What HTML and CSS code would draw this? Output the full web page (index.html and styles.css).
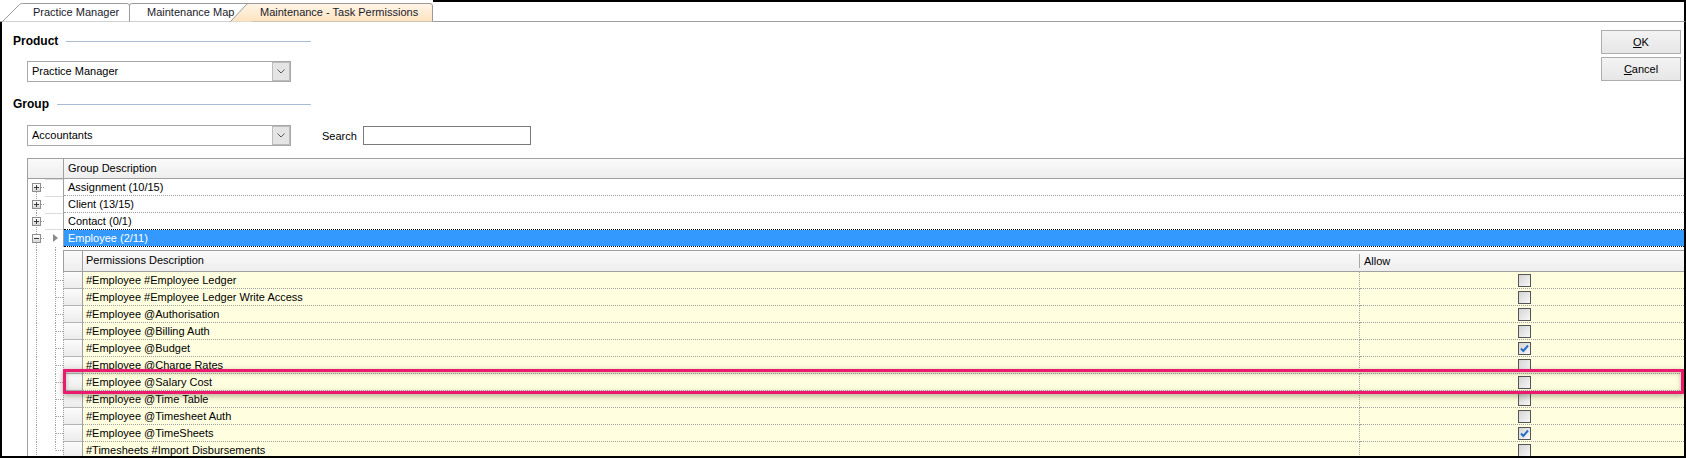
FILE: index.html
```html
<!DOCTYPE html>
<html>
<head>
<meta charset="utf-8">
<link rel="stylesheet" href="styles.css">
</head>
<body>
<div class="window">
  <div class="tabstrip">
    <svg class="tabshapes" width="440" height="22" viewBox="0 0 440 22">
      <defs>
        <linearGradient id="act" x1="0" y1="0" x2="0" y2="1">
          <stop offset="0" stop-color="#fff5e8"/>
          <stop offset="1" stop-color="#fde3c0"/>
        </linearGradient>
      </defs>
      <path d="M0 21.5H440" stroke="#a0a0a0" fill="none"/>
      <path d="M2.5 21.5 L19.5 4.5 Q20.5 3.5 22.5 3.5 H127 Q129.5 3.5 129.5 6 V21.5" fill="#fff" stroke="#9a9a9a"/>
      <path d="M129.5 21.5 V6 Q129.5 3.5 132 3.5 H252 V21.5" fill="#fff" stroke="#9a9a9a"/>
      <path d="M230.5 21.5 L246.5 4.5 Q247.5 3.5 249.5 3.5 H430 Q432.5 3.5 432.5 6 V21.5" fill="url(#act)" stroke="#9a9a9a"/>
    </svg>
    <div class="tab t1">Practice Manager</div>
    <div class="tab t2">Maintenance Map</div>
    <div class="tab t3">Maintenance - Task Permissions</div>
    <div class="tabfill"></div>
  </div>

  <div class="panel">
    <div class="top">
      <div class="form">
        <div class="section-head"><span>Product</span><span class="rule"></span></div>
        <div class="combo first">
          <span class="combo-text">Practice Manager</span>
          <span class="combo-btn"><svg width="8" height="5" viewBox="0 0 8 5"><path d="M0.5 0.5 L4 4 L7.5 0.5" fill="none" stroke="#5a5a5a"/></svg></span>
        </div>
        <div class="section-head group"><span>Group</span><span class="rule"></span></div>
        <div class="search-row">
          <div class="combo">
            <span class="combo-text">Accountants</span>
            <span class="combo-btn"><svg width="8" height="5" viewBox="0 0 8 5"><path d="M0.5 0.5 L4 4 L7.5 0.5" fill="none" stroke="#5a5a5a"/></svg></span>
          </div>
          <span class="search-label">Search</span>
          <span class="search-input"></span>
        </div>
      </div>
      <div class="btns">
        <div class="btn"><span><u>O</u>K</span></div>
        <div class="btn"><span><u>C</u>ancel</span></div>
      </div>
    </div>

    <div class="grid">
      <div class="ghead">
        <div class="lead"></div>
        <div class="cap">Group Description</div>
      </div>

      <div class="grow">
        <div class="tree first"><span class="exp"><svg width="7" height="7" viewBox="0 0 7 7"><path d="M1 3.5H6M3.5 1V6" stroke="#3a3a3a"/></svg></span></div>
        <div class="sel"></div>
        <div class="gcell">Assignment (10/15)</div>
      </div>
      <div class="grow">
        <div class="tree"><span class="exp"><svg width="7" height="7" viewBox="0 0 7 7"><path d="M1 3.5H6M3.5 1V6" stroke="#3a3a3a"/></svg></span></div>
        <div class="sel"></div>
        <div class="gcell">Client (13/15)</div>
      </div>
      <div class="grow">
        <div class="tree"><span class="exp"><svg width="7" height="7" viewBox="0 0 7 7"><path d="M1 3.5H6M3.5 1V6" stroke="#3a3a3a"/></svg></span></div>
        <div class="sel"></div>
        <div class="gcell nob">Contact (0/1)</div>
      </div>
      <div class="grow selrow">
        <div class="tree"><span class="exp"><svg width="7" height="7" viewBox="0 0 7 7"><path d="M1 3.5H6" stroke="#3a3a3a"/></svg></span></div>
        <div class="sel"><span class="arrow"></span></div>
        <div class="gcell selected">Employee (2/11)</div>
      </div>

      <div class="child-gap"><div class="gut"></div></div>

      <div class="chead">
        <div class="gut plain"></div>
        <div class="chead-band">
          <div class="chsel"></div>
          <div class="chdesc">Permissions Description</div>
          <div class="challow"><span class="sep"></span>Allow</div>
        </div>
      </div>

      <div class="crow"><div class="gut"></div><div class="csel"></div><div class="cdesc">#Employee #Employee Ledger</div><div class="callow"><span class="cb"></span></div></div>
      <div class="crow"><div class="gut"></div><div class="csel"></div><div class="cdesc">#Employee #Employee Ledger Write Access</div><div class="callow"><span class="cb"></span></div></div>
      <div class="crow"><div class="gut"></div><div class="csel"></div><div class="cdesc">#Employee @Authorisation</div><div class="callow"><span class="cb"></span></div></div>
      <div class="crow"><div class="gut"></div><div class="csel"></div><div class="cdesc">#Employee @Billing Auth</div><div class="callow"><span class="cb"></span></div></div>
      <div class="crow"><div class="gut"></div><div class="csel"></div><div class="cdesc">#Employee @Budget</div><div class="callow"><span class="cb"><svg width="11" height="11" viewBox="0 0 11 11"><path d="M2 5.5 L4.3 8 L9 2.5" fill="none" stroke="#2a6fc9" stroke-width="2"/></svg></span></div></div>
      <div class="crow"><div class="gut"></div><div class="csel"></div><div class="cdesc">#Employee @Charge Rates</div><div class="callow"><span class="cb"></span></div></div>
      <div class="crow"><div class="gut"></div><div class="csel"></div><div class="cdesc">#Employee @Salary Cost</div><div class="callow"><span class="cb"></span></div></div>
      <div class="crow"><div class="gut"></div><div class="csel"></div><div class="cdesc">#Employee @Time Table</div><div class="callow"><span class="cb"></span></div></div>
      <div class="crow"><div class="gut"></div><div class="csel"></div><div class="cdesc">#Employee @Timesheet Auth</div><div class="callow"><span class="cb"></span></div></div>
      <div class="crow"><div class="gut"></div><div class="csel"></div><div class="cdesc">#Employee @TimeSheets</div><div class="callow"><span class="cb"><svg width="11" height="11" viewBox="0 0 11 11"><path d="M2 5.5 L4.3 8 L9 2.5" fill="none" stroke="#2a6fc9" stroke-width="2"/></svg></span></div></div>
      <div class="crow"><div class="gut last"></div><div class="csel"></div><div class="cdesc">#Timesheets #Import Disbursements</div><div class="callow"><span class="cb"></span></div></div>
    </div>
  </div>

  <div class="highlight"></div>
</div>
</body>
</html>
```
FILE: styles.css
```css
* { box-sizing: border-box; }
html, body { margin: 0; padding: 0; }
body {
  width: 1686px;
  height: 458px;
  overflow: hidden;
  background: #fff;
  font-family: "Liberation Sans", Arial, sans-serif;
  font-size: 11px;
  color: #000;
}
.window {
  position: relative;
  width: 1686px;
  height: 458px;
  display: flex;
  flex-direction: column;
}

/* ---------- tabs ---------- */
.tabstrip {
  position: relative;
  flex: none;
  height: 22px;
  display: flex;
}
.tabshapes { position: absolute; left: 0; top: 0; }
.tab {
  position: relative;
  height: 22px;
  padding-top: 2px;
  line-height: 20px;
  white-space: nowrap;
  color: #1a1a2a;
}
.t1 { width: 129px; padding-left: 33px; }
.t2 { width: 116px; padding-left: 18px; }
.t3 { width: 188px; padding-left: 15px; }
.tabfill {
  flex: 1;
  height: 22px;
  border-top: 2px solid #000;
  border-right: 2px solid #000;
  border-bottom: 1px solid #a0a0a0;
}

/* ---------- panel ---------- */
.panel {
  flex: 1;
  min-height: 0;
  display: flex;
  flex-direction: column;
  border-left: 2px solid #000;
  border-right: 2px solid #000;
  border-bottom: 2px solid #000;
}
.top {
  display: flex;
  justify-content: space-between;
  flex: none;
}
.form { padding-left: 11px; padding-top: 12px; }
.section-head {
  display: flex;
  align-items: center;
  width: 298px;
  height: 14px;
  font-size: 12px;
  font-weight: bold;
  line-height: 14px;
}
.section-head .rule {
  flex: 1;
  height: 1px;
  background: #a9bcd2;
  margin-left: 8px;
}
.section-head.group { margin-top: 15px; }
.combo {
  margin-left: 14px;
  width: 264px;
  height: 21px;
  border: 1px solid #a8a8a8;
  display: flex;
  background: #fff;
}
.combo.first { margin-top: 13px; }
.combo-text {
  flex: 1;
  padding-left: 4px;
  line-height: 19px;
  white-space: nowrap;
}
.combo-btn {
  width: 18px;
  height: 19px;
  background: #e4e4e4;
  border: 1px solid #bcbcbc;
  display: flex;
  align-items: center;
  justify-content: center;
}
.search-row {
  display: flex;
  align-items: center;
  margin-top: 14px;
}
.search-label { margin-left: 31px; }
.search-input {
  margin-left: 6px;
  width: 168px;
  height: 19px;
  border: 1px solid #7a7a7a;
  background: #fff;
}
.btns {
  display: flex;
  flex-direction: column;
  gap: 3px;
  padding-top: 8px;
  margin-right: 3px;
}
.btn {
  width: 80px;
  height: 24px;
  border: 1px solid #adadad;
  background: linear-gradient(#f3f3f3, #e6e6e6);
  display: flex;
  align-items: center;
  justify-content: center;
}
.btn u { text-decoration: underline; }

/* ---------- grid ---------- */
.grid {
  flex: 1;
  min-height: 0;
  margin-left: 25px;
  margin-top: 12px;
  border-top: 1px solid #a0a0a0;
  border-left: 1px solid #a0a0a0;
  overflow: hidden;
  display: flex;
  flex-direction: column;
}
.ghead {
  flex: none;
  display: flex;
  height: 20px;
  border-bottom: 1px solid #a0a0a0;
  background: linear-gradient(#fafafa, #eeeeee);
}
.ghead .lead { width: 36px; border-right: 1px solid #a0a0a0; }
.ghead .cap { padding-left: 4px; line-height: 19px; }

.grow { flex: none; display: flex; }
.tree {
  width: 17px;
  display: flex;
  align-items: center;
  background:
    repeating-linear-gradient(to right, #a0a0a0 0 1px, transparent 1px 2px) 13px 50% / 4px 1px no-repeat,
    repeating-linear-gradient(to bottom, #a0a0a0 0 1px, transparent 1px 2px) 8px 0 / 1px 100% no-repeat;
}
.tree.first {
  background:
    repeating-linear-gradient(to right, #a0a0a0 0 1px, transparent 1px 2px) 13px 50% / 4px 1px no-repeat,
    repeating-linear-gradient(to bottom, #a0a0a0 0 1px, transparent 1px 2px) 8px 100% / 1px 50% no-repeat;
}
.exp {
  margin-left: 4px;
  width: 9px;
  height: 9px;
  border: 1px solid #8f8f8f;
  background: linear-gradient(#ffffff, #d6d6d6);
  display: flex;
}
.sel {
  width: 19px;
  border-right: 1px solid #a0a0a0;
  box-shadow: inset 0 1px 0 #dcdcdc;
  display: flex;
  align-items: center;
}
.gcell {
  flex: 1;
  height: 17px;
  border-bottom: 1px dotted #a0a0a0;
  padding-left: 4px;
  line-height: 16px;
  white-space: nowrap;
}
.gcell.nob { height: 16px; border-bottom: none; }
.gcell.selected {
  height: 18px;
  background: #3399ff;
  background-clip: padding-box;
  color: #fff;
  border-top: 1px dotted #000;
  border-bottom: 1px dotted #000;
  line-height: 16px;
}
.arrow {
  margin-left: 8px;
  width: 0;
  height: 0;
  border-left: 5px solid #8a8a8a;
  border-top: 4px solid transparent;
  border-bottom: 4px solid transparent;
}

/* ---------- child band ---------- */
.gut {
  width: 35px;
  flex: none;
  background:
    repeating-linear-gradient(to right, #a0a0a0 0 1px, transparent 1px 2px) 28px 50% / 7px 1px no-repeat,
    repeating-linear-gradient(to bottom, #a0a0a0 0 1px, transparent 1px 2px) 8px 0 / 1px 100% no-repeat,
    repeating-linear-gradient(to bottom, #a0a0a0 0 1px, transparent 1px 2px) 27px 0 / 1px 100% no-repeat;
}
.gut.plain, .child-gap .gut {
  background:
    repeating-linear-gradient(to bottom, #a0a0a0 0 1px, transparent 1px 2px) 8px 0 / 1px 100% no-repeat,
    repeating-linear-gradient(to bottom, #a0a0a0 0 1px, transparent 1px 2px) 27px 0 / 1px 100% no-repeat;
}
.gut.last {
  background:
    repeating-linear-gradient(to right, #a0a0a0 0 1px, transparent 1px 2px) 28px 50% / 7px 1px no-repeat,
    repeating-linear-gradient(to bottom, #a0a0a0 0 1px, transparent 1px 2px) 8px 0 / 1px 100% no-repeat,
    repeating-linear-gradient(to bottom, #a0a0a0 0 1px, transparent 1px 2px) 27px 0 / 1px 50% no-repeat;
}
.child-gap { flex: none; display: flex; height: 3px; }
.chead { flex: none; display: flex; height: 22px; }
.chead-band {
  flex: 1;
  display: flex;
  border-top: 1px solid #a0a0a0;
  border-bottom: 1px solid #a0a0a0;
  border-left: 1px solid #a0a0a0;
  background: linear-gradient(#fafafa, #eeeeee);
}
.chsel { width: 19px; flex: none; border-right: 1px solid #a0a0a0; }
.chdesc { width: 1276px; flex: none; padding-left: 3px; line-height: 19px; white-space: nowrap; }
.challow { flex: none; display: flex; align-items: center; }
.challow .sep { width: 1px; height: 14px; background: #a8a8a8; margin-right: 4px; }

.crow { flex: none; display: flex; height: 17px; background-color: #fff; }
.csel {
  width: 20px;
  flex: none;
  border-left: 1px dotted #a0a0a0;
  border-right: 1px solid #a0a0a0;
  border-bottom: 1px solid #b4b4b4;
  background: linear-gradient(#fcfcfc, #ececec);
}
.cdesc {
  width: 1277px;
  flex: none;
  padding-left: 3px;
  line-height: 16px;
  white-space: nowrap;
  background: #ffffdf;
  border-right: 1px dotted #a0a0a0;
  border-bottom: 1px dotted #a0a0a0;
}
.callow {
  width: 328px;
  flex: none;
  display: flex;
  align-items: center;
  justify-content: center;
  background: #ffffdf;
  border-bottom: 1px dotted #a0a0a0;
}
.cb {
  width: 13px;
  height: 13px;
  border: 1px solid #555;
  background: linear-gradient(135deg, #d4d4d4, #f8f8f8);
  display: flex;
  align-items: center;
  justify-content: center;
}

/* ---------- annotation overlay ---------- */
.highlight {
  position: absolute;
  left: 63px;
  top: 369px;
  width: 1621px;
  height: 25px;
  border: 3px solid #ec1a6f;
  box-shadow: 0 2px 6px rgba(60, 60, 30, 0.4), inset 0 1px 5px rgba(60, 60, 30, 0.35);
  pointer-events: none;
}
```
